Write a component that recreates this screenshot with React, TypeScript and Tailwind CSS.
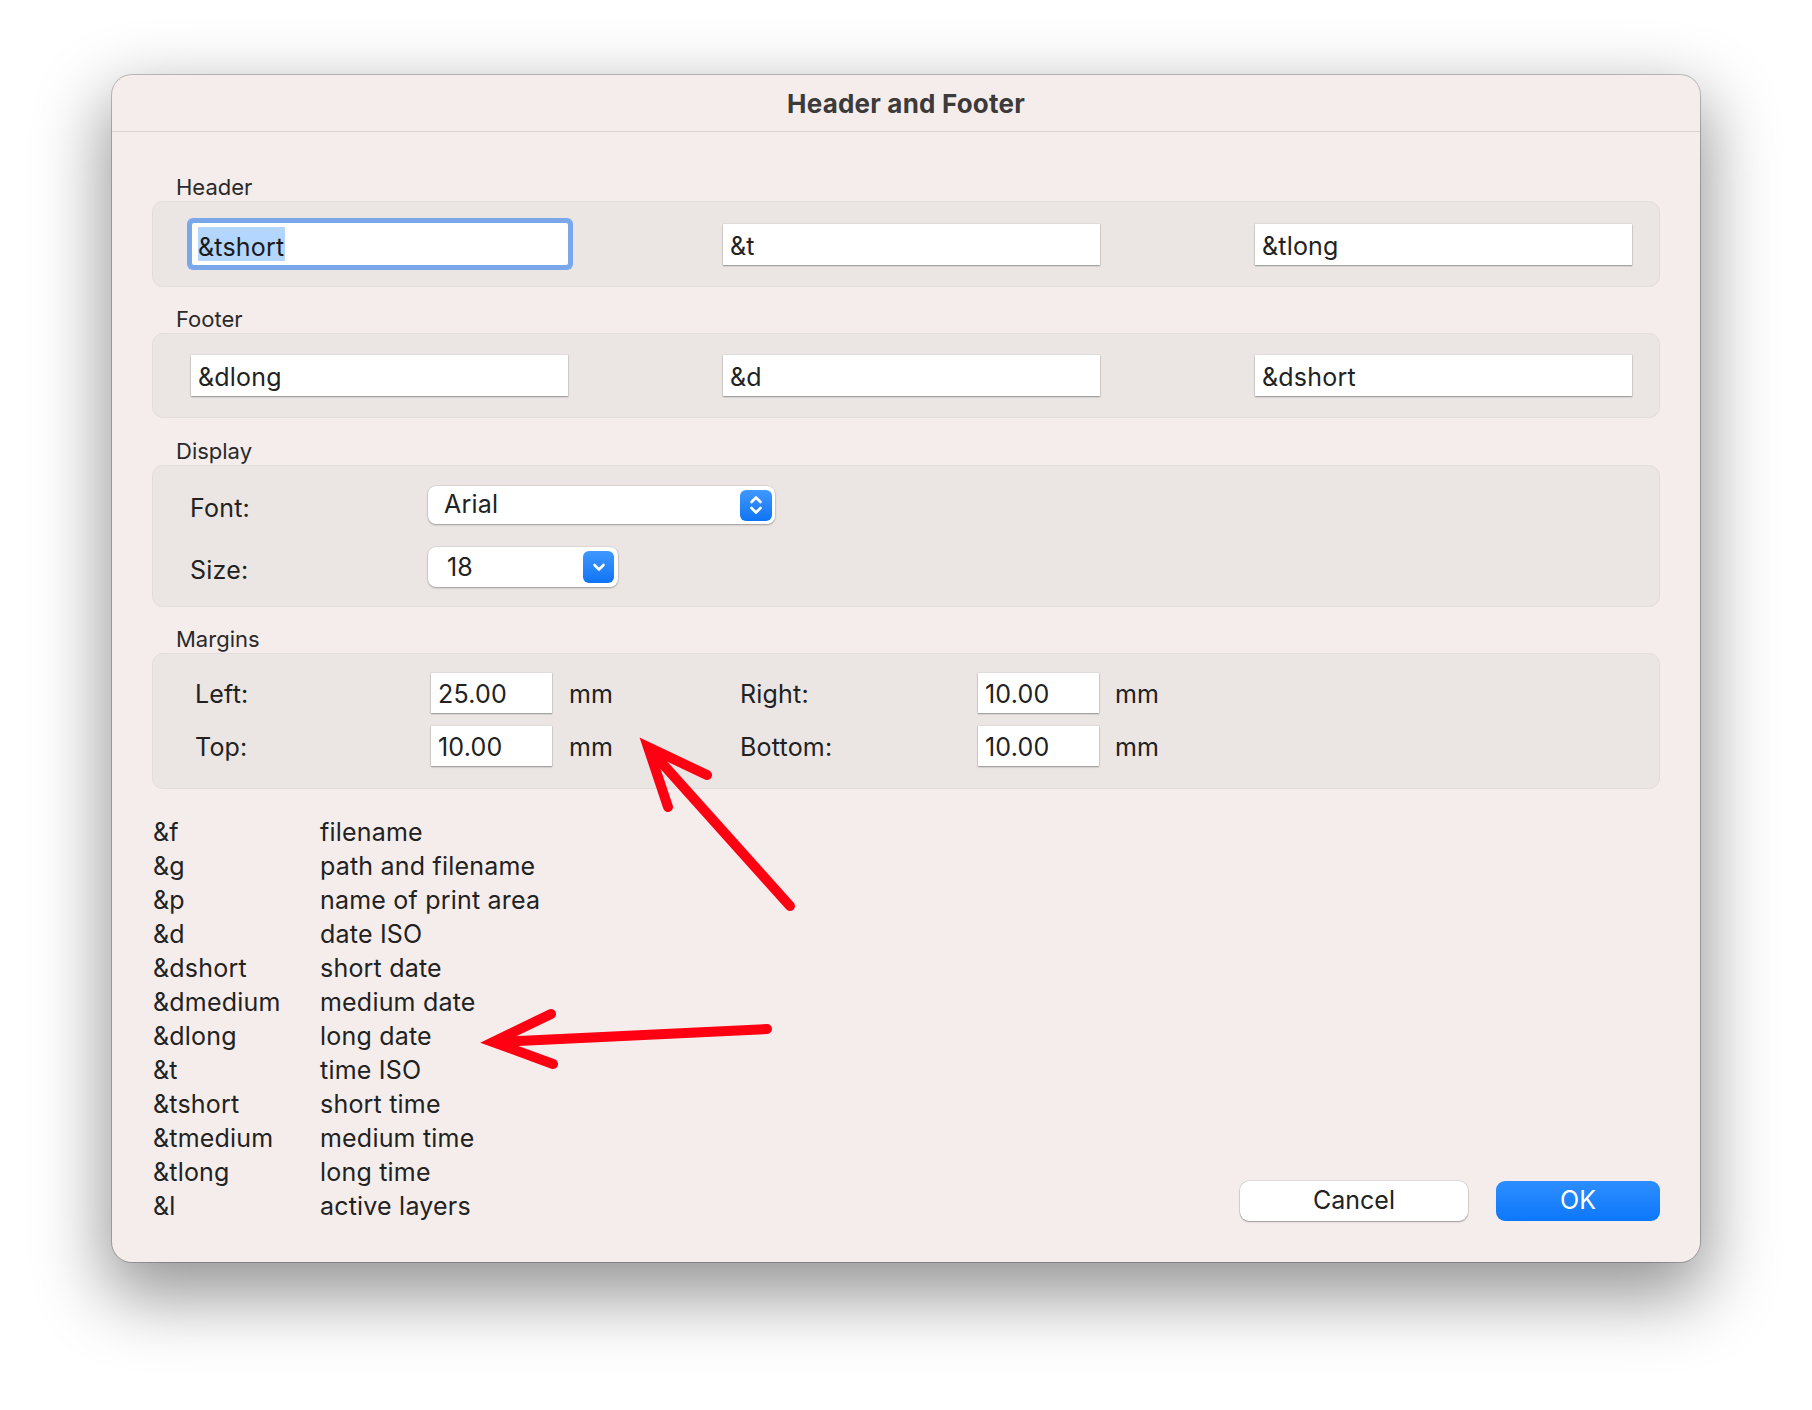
import React from "react";

const F = "font-['Inter',sans-serif]";

function Field({ text, focused }: { text: string; focused?: boolean }) {
  if (focused) {
    return (
      <div className="w-[376px] h-[42px] bg-white rounded-[2px] ring-[5px] ring-[#7aa7ea] flex items-center pl-[6px]">
        <span className="bg-[#b3d6fe] text-[25px] tracking-[0.2px] leading-[34px] pt-[3px] h-[34px] text-[#1a1a1a] pr-[1px]">{text}</span>
      </div>
    );
  }
  return (
    <div className="w-[377px] h-[41px] bg-white shadow-[0_1px_1.5px_rgba(0,0,0,0.35),0_0_0_0.5px_rgba(0,0,0,0.08)] flex items-center pl-[7px] pt-[5px] text-[25px] tracking-[0.2px] text-[#222]">
      {text}
    </div>
  );
}

function NumField({ text }: { text: string }) {
  return (
    <div className="w-[121px] h-[40px] bg-white shadow-[0_1px_1.5px_rgba(0,0,0,0.35),0_0_0_0.5px_rgba(0,0,0,0.08)] flex items-center pl-[7px] pt-[3px] text-[25px] tracking-[0.2px] text-[#222]">
      {text}
    </div>
  );
}

function GroupLabel({ children }: { children: React.ReactNode }) {
  return <div className="h-[27px] leading-[26px] pl-[24px] text-[22px] text-[#2a2a2a]">{children}</div>;
}

function Box({ children, className }: { children: React.ReactNode; className?: string }) {
  return (
    <div className={"bg-[#ebe6e4] border border-[#e2dcda] rounded-[11px] " + (className ?? "")}>{children}</div>
  );
}

const list: [string, string][] = [
  ["&f", "filename"],
  ["&g", "path and filename"],
  ["&p", "name of print area"],
  ["&d", "date ISO"],
  ["&dshort", "short date"],
  ["&dmedium", "medium date"],
  ["&dlong", "long date"],
  ["&t", "time ISO"],
  ["&tshort", "short time"],
  ["&tmedium", "medium time"],
  ["&tlong", "long time"],
  ["&l", "active layers"],
];

export default function App() {
  return (
    <div className={"relative w-[1812px] h-[1410px] bg-white overflow-hidden pt-[75px] pl-[112px] " + F}>
      <div className="w-[1588px] h-[1187px] bg-[#f5edeb] rounded-[20px] shadow-[0_28px_70px_6px_rgba(0,0,0,0.42),0_0_0_1px_rgba(0,0,0,0.22)] flex flex-col">
        {/* Title bar */}
        <div className="h-[57px] border-b border-[#d9d2d0] flex items-center justify-center text-[26px] tracking-[0.2px] font-bold text-[#3d3a3a]">
          Header and Footer
        </div>

        <div className="px-[40px] pt-[42px] flex flex-col">
          <GroupLabel>Header</GroupLabel>
          <Box className="h-[86px] flex items-center justify-between pl-[39px] pr-[27px]">
            <Field text="&tshort" focused />
            <Field text="&t" />
            <Field text="&tlong" />
          </Box>

          <div className="h-[19px]" />
          <GroupLabel>Footer</GroupLabel>
          <Box className="h-[85px] flex items-center justify-between pl-[38px] pr-[27px]">
            <Field text="&dlong" />
            <Field text="&d" />
            <Field text="&dshort" />
          </Box>

          <div className="h-[20px]" />
          <GroupLabel>Display</GroupLabel>
          <Box className="h-[142px] pl-[37px] pt-[20px] flex flex-col gap-[23px]">
            <div className="flex items-center h-[38px]">
              <div className="w-[238px] text-[25px] tracking-[0.2px] text-[#222] pt-[8px]">Font:</div>
              <div className="w-[347px] h-[38px] bg-white rounded-[8px] shadow-[0_1px_2px_rgba(0,0,0,0.3),0_0_0_0.5px_rgba(0,0,0,0.1)] flex items-center justify-between pl-[16px] pr-[3px]">
                <span className="text-[25px] tracking-[0.2px] text-[#222]">Arial</span>
                <div className="w-[32px] h-[31px] rounded-[6px] bg-gradient-to-b from-[#3f98ff] to-[#0c74f4] flex items-center justify-center">
                  <svg width="14" height="22" viewBox="0 0 14 22" fill="none" stroke="white" strokeWidth="2.6" strokeLinecap="round" strokeLinejoin="round">
                    <path d="M2.5 8 L7 3.5 L11.5 8" />
                    <path d="M2.5 14 L7 18.5 L11.5 14" />
                  </svg>
                </div>
              </div>
            </div>
            <div className="flex items-center h-[40px]">
              <div className="w-[238px] text-[25px] tracking-[0.2px] text-[#222] pt-[7px]">Size:</div>
              <div className="w-[190px] h-[40px] bg-white rounded-[8px] shadow-[0_1px_2px_rgba(0,0,0,0.3),0_0_0_0.5px_rgba(0,0,0,0.1)] flex items-center justify-between pl-[19px] pr-[4px]">
                <span className="text-[25px] tracking-[0.2px] text-[#222] pt-[2px]">18</span>
                <div className="w-[31px] h-[32px] rounded-[6px] bg-gradient-to-b from-[#3f98ff] to-[#0c74f4] flex items-center justify-center">
                  <svg width="14" height="10" viewBox="0 0 14 10" fill="none" stroke="white" strokeWidth="2.6" strokeLinecap="round" strokeLinejoin="round">
                    <path d="M2.5 3 L7 7.5 L11.5 3" />
                  </svg>
                </div>
              </div>
            </div>
          </Box>

          <div className="h-[19px]" />
          <GroupLabel>Margins</GroupLabel>
          <Box className="h-[136px] pl-[42px] pt-[19px] grid grid-cols-[236px_138px_171px_238px_137px_auto] grid-rows-[40px_40px] gap-y-[13px] items-center text-[25px] tracking-[0.2px] text-[#222]">
            <div className="pt-[4px]">Left:</div>
            <NumField text="25.00" />
            <div className="pt-[4px]">mm</div>
            <div className="pt-[4px]">Right:</div>
            <NumField text="10.00" />
            <div className="pt-[4px]">mm</div>
            <div className="pt-[4px]">Top:</div>
            <NumField text="10.00" />
            <div className="pt-[4px]">mm</div>
            <div className="pt-[4px]">Bottom:</div>
            <NumField text="10.00" />
            <div className="pt-[4px]">mm</div>
          </Box>

          <div className="mt-[26px] flex items-end justify-between">
            <div className="grid grid-cols-[167px_auto] text-[25px] tracking-[0.2px] leading-[34px] text-[#222] pl-[1px]">
              {list.map(([k, v]) => (
                <React.Fragment key={k}>
                  <div>{k}</div>
                  <div>{v}</div>
                </React.Fragment>
              ))}
            </div>
            <div className="flex gap-[28px] mb-[2px]">
              <div className="w-[228px] h-[40px] bg-white rounded-[9px] shadow-[0_1px_1.5px_rgba(0,0,0,0.3),0_0_0_0.5px_rgba(0,0,0,0.15)] flex items-center justify-center text-[25px] text-[#222]">
                Cancel
              </div>
              <div className="w-[164px] h-[40px] rounded-[9px] bg-gradient-to-b from-[#2c8dff] to-[#0a78fa] flex items-center justify-center text-[25px] text-white">
                OK
              </div>
            </div>
          </div>
        </div>
      </div>

      {/* Red annotation arrows */}
      <svg className="absolute inset-0 pointer-events-none" width="1812" height="1410" viewBox="0 0 1812 1410" fill="none" stroke="#ff0012" strokeWidth="10" strokeLinecap="round" strokeLinejoin="miter">
        <path d="M790 906 L652 752" />
        <path d="M707 775 L648 747 L668 807" />
        <path d="M767 1029 L498 1042" />
        <path d="M551 1014 L493 1042 L553 1064" />
      </svg>
    </div>
  );
}
